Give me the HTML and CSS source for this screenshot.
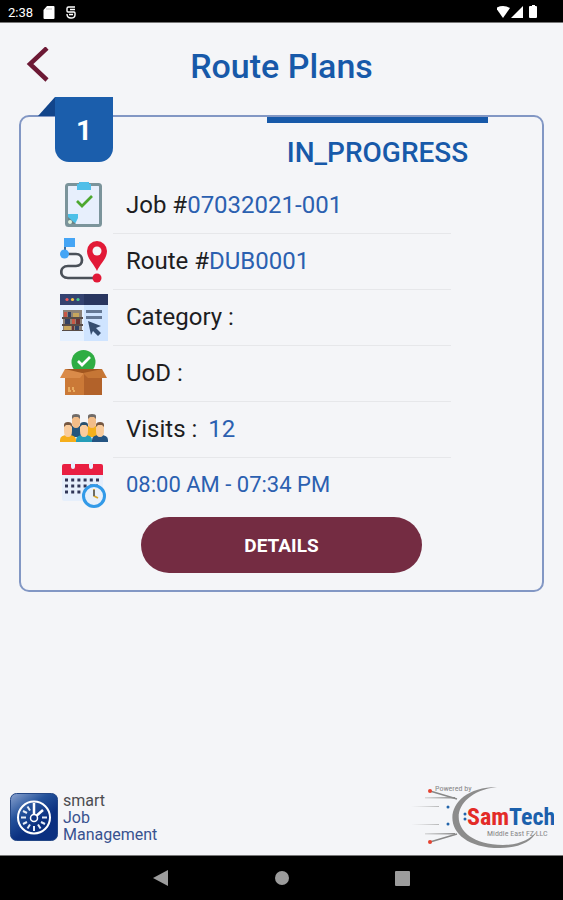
FILE: index.html
```html
<!DOCTYPE html>
<html lang="en">
<head>
<meta charset="utf-8">
<meta name="viewport" content="width=device-width, initial-scale=1">
<title>Route Plans</title>
<link rel="stylesheet" href="styles.css">
</head>
<body>
<div class="status-bar">
  <span class="clock">2:38</span>
  <svg class="sys-icon" viewBox="0 0 12 13" width="12" height="13" aria-hidden="true"><path d="M4 0h6.500q1 0 1 1v11q0 1-1 1h-9q-1 0-1-1V4z" fill="#fff"/><path d="M4 2v2M6 2v2M8 2v2" stroke="#bbb" stroke-width="1"/></svg>
  <svg class="sys-icon" viewBox="0 0 12 13" width="12" height="13" aria-hidden="true"><path d="M10 1H3.500Q2 1 2 2.500V5q0 1 1 1h6q1 0 1 1v2q0 3-4 3-4 0-4-4M5 3.500h5M4 8.500h4" fill="none" stroke="#fff" stroke-width="1.400"/></svg>
  <svg class="signals" viewBox="0 0 44 14" width="44" height="14" aria-hidden="true"><path d="M-1 3Q6-1 13 3L6 13z" fill="#fff"/><path d="M26 1v12H14z" fill="#fff"/><path d="M35 1V0h3v1h1q1 0 1 1v10q0 1-1 1h-6q-1 0-1-1V2q0-1 1-1z" fill="#fff"/></svg>
</div>

<main class="screen">
  <header class="top">
    <button class="back" type="button" aria-label="Back"><svg viewBox="0 2 24 38" width="24" height="38"><path d="M21 3 4 19l17 16" fill="none" stroke="#6c1935" stroke-width="4.500"/></svg></button>
    <h1>Route Plans</h1>
  </header>

  <article class="card">
    <div class="badge">
      <svg class="fold" viewBox="0 0 17 19" width="17" height="19" aria-hidden="true"><path d="M17 0v19H0z" fill="#12458b"/></svg>
      <span class="number">1</span>
    </div>
    <h2 class="state">IN_PROGRESS</h2>
    <ul class="facts">
      <li>
        <svg class="icon" viewBox="0 0 48 48" aria-hidden="true"><rect x="6.500" y="3.500" width="34" height="41" rx="2" fill="#e7effc" stroke="#7b949b" stroke-width="3"/><path d="M8 33h10v4l-3 6H8z" fill="#4dc0e8"/><path d="M8 36l8 7H8z" fill="#6d8588"/><circle cx="10" cy="41" r="2" fill="#dff2df"/><path d="M19 1h10v2h2v6H17V3h2z" fill="#51bfe9"/><path d="M17 20l5 5 10-10" fill="none" stroke="#4da82f" stroke-width="2.700"/></svg>
        <p>Job #<span class="value">07032021-001</span></p>
      </li>
      <li>
        <svg class="icon" viewBox="0 0 48 48" aria-hidden="true"><path d="M5 17h11c8 0 8 12 0 12H8c-9 0-9 12 0 12h28" fill="none" stroke="#4a5058" stroke-width="2.700"/><path d="M5 16V3" stroke="#416c9a" stroke-width="2"/><path d="M4 1h11v9H4z" fill="#45a5f5"/><circle cx="4.500" cy="17" r="4.500" fill="#45a5f5"/><path d="M37 34c-3-7-10-12-10-20a10 10 0 0 1 20 0c0 8-7 13-10 20z" fill="#e21937"/><circle cx="37" cy="14" r="4.500" fill="#f4f5f8"/><circle cx="37" cy="41" r="4.500" fill="#e21937"/></svg>
        <p>Route #<span class="value">DUB0001</span></p>
      </li>
      <li>
        <svg class="icon" viewBox="0 0 48 48" aria-hidden="true"><path d="M0 12h48v36H0z" fill="#e4f0ff"/><path d="M24 12h24v36H24z" fill="#cfe4ff"/><path d="M0 1h48v11H0z" fill="#344270"/><path d="M24 1h24v11H24z" fill="#293660"/><circle cx="7" cy="6.500" r="1.600" fill="#f05b5b"/><circle cx="12.500" cy="6.500" r="1.600" fill="#f9c646"/><circle cx="18" cy="6.500" r="1.600" fill="#4ac991"/><path d="M3 17h19v21H3z" fill="#8c8278"/><path d="M4 19h3v5H4zM12 26h3v5h-3z" fill="#c85745"/><path d="M8 19h3v5H8zM5 26h5v5H5zM15 33h4v4h-4z" fill="#334263"/><path d="M13 20h6v4h-6zM4 33h7v4H4z" fill="#c7a65d"/><path d="M16 26h4v5h-4zM12 33h2v4h-2z" fill="#6c3435"/><path d="M2 24h21v2H2zM2 31h21v2H2zM2 37h21v1H2z" fill="#574c48"/><path d="M26 17h16v3H26zM26 23h16v3H26z" fill="#647895"/><path d="M28 28l13 5-5 2 5 5-3 3-5-5-2 4z" fill="#364e70"/></svg>
        <p>Category :</p>
      </li>
      <li>
        <svg class="icon" viewBox="0 0 48 48" aria-hidden="true"><circle cx="23.500" cy="13" r="12" fill="#2fad43"/><path d="M18 12l4 4 8-8" fill="none" stroke="#fff" stroke-width="2.700"/><path d="M5 20h19v26H5z" fill="#cb7937"/><path d="M24 20h18v26H24z" fill="#b2622a"/><path d="M5 20h37v5H5z" fill="#a1561f"/><path d="M5 20l-5 9h20l4-5h-2z" fill="#da8b49"/><path d="M42 20l5 9H28l-5-5z" fill="#c67635"/><path d="M8 42h3M13 42h2M9 38v3M13 38v3" stroke="#f3bd6f" stroke-width="1.500"/></svg>
        <p>UoD :</p>
      </li>
      <li>
        <svg class="icon" viewBox="0 0 48 48" aria-hidden="true"><path d="M9 26q0-6 7-6t7 6v6H9z" fill="#24567d"/><path d="M25 26q0-6 7-6t7 6v6H25z" fill="#f4b01c"/><path d="M12 12h8v6q0 5-4 5t-4-5zM28 12h8v6q0 5-4 5t-4-5z" fill="#f2bd89"/><path d="M12 14v-3q0-2 4-2t4 2v3l-2-2h-4zM28 14v-3q0-2 4-2t4 2v3l-2-2h-4z" fill="#706b68"/><path d="M0 37v-2q0-5 8-5t8 5v2H0z" fill="#f5ae1b"/><path d="M16 37v-2q0-5 8-5t8 5v2H16z" fill="#259db8"/><path d="M32 37v-2q0-5 8-5t8 5v2H32z" fill="#245482"/><path d="M4 20h8v6q0 6-4 6t-4-6zM20 20h8v6q0 6-4 6t-4-6zM36 20h8v6q0 6-4 6t-4-6z" fill="#f9cc9d"/><path d="M4 22v-2q0-3 4-3t4 3v2l-2-2H6zM36 22v-2q0-3 4-3t4 3v2l-2-2h-4z" fill="#765842"/><path d="M20 22v-2q0-3 4-3t4 3v2l-2-2h-4z" fill="#27506f"/></svg>
        <p>Visits :<span class="value spaced">12</span></p>
      </li>
      <li>
        <svg class="icon" viewBox="0 0 48 48" aria-hidden="true"><rect x="2" y="4" width="41" height="36" rx="2" fill="#e6effb"/><path d="M2 14V5q0-2 2-2h37q2 0 2 2v9z" fill="#e91f42"/><path d="M13 2v4M31 2v4" stroke="#e8f0ff" stroke-width="4" stroke-linecap="round"/><path d="M5 19h36M5 25h33M5 31h18" stroke="#303657" stroke-width="3" stroke-dasharray="3 3.200"/><circle cx="34" cy="35" r="10.500" fill="#e8f0fa" stroke="#329ae8" stroke-width="3"/><path d="M34 28v7l4 2" fill="none" stroke="#d8a62b" stroke-width="1.800"/><path d="M34 29v6" stroke="#49566e" stroke-width="1.500"/></svg>
        <p class="hours"><span class="value">08:00 AM - 07:34 PM</span></p>
      </li>
    </ul>
    <button class="details" type="button">DETAILS</button>
  </article>

  <footer class="brands">
    <div class="product">
      <svg viewBox="0 0 48 48" width="48" height="48" aria-hidden="true">
        <defs><linearGradient id="tile" x1="0" y1="0" x2=".5" y2=".7"><stop offset="0" stop-color="#8ca4d0"/><stop offset=".55" stop-color="#24529b"/><stop offset="1" stop-color="#0b3080"/></linearGradient></defs>
        <rect x=".5" y=".5" width="47" height="47" rx="6" fill="url(#tile)" stroke="#244786"/>
        <circle cx="24" cy="24.500" r="16" fill="none" stroke="#fff" stroke-width="2"/>
        <path d="M24 33v5M11 24.500h5M32 24.500h5M13 18l4 2M13 31l4-2M31 29l4 2M17.500 13.500l2.500 4M17.500 35.500l2.500-4M30.500 35.500l-2.500-4" stroke="#e8eef8" stroke-width="2"/>
        <path d="M24 10v15l9-8" fill="none" stroke="#fff" stroke-width="2.500"/><circle cx="24" cy="25" r="3.500" fill="#0d3482" stroke="#fff" stroke-width="1.500"/>
      </svg>
      <p class="product-name"><span class="lead">smart</span><span>Job</span><span>Management</span></p>
    </div>
    <svg class="company" viewBox="0 0 145 68" width="145" height="68" role="img" aria-label="Powered by SamTech Middle East FZ LLC">
      <defs><linearGradient id="tail"><stop offset="0" stop-color="#aaa" stop-opacity="0"/><stop offset="1" stop-color="#888"/></linearGradient></defs>
      <path d="M88 4C30 4 26 65 91 65c18 0 32-6 37-17-6 8-18 14-34 14C36 62 36 10 88 4z" fill="#8c8c8c"/>
      <path d="M21 8l27 8M21 59l27-8" stroke="#888" stroke-width="1.500"/>
      <path d="M16 14h30v1.500H16zM2 23h28v1H2zM2 41h28v1H2zM16 50h30v1.500H16z" fill="url(#tail)"/>
      <circle cx="21" cy="8" r="2" fill="#e54331"/><circle cx="21" cy="59" r="2" fill="#e54331"/>
      <circle cx="39" cy="24" r="1.500" fill="#2264aa"/><circle cx="39" cy="41" r="1.500" fill="#2264aa"/>
      <circle cx="56" cy="31" r="1.500" fill="#2264aa"/><circle cx="56" cy="36" r="1.500" fill="#2264aa"/>
      <text class="small-mark" x="26" y="8">Powered by</text>
      <text class="big-mark" x="58" y="42"><tspan class="red">Sam</tspan><tspan class="blue">Tech</tspan></text>
      <text class="small-mark" x="78" y="53">Middle East FZ LLC</text>
    </svg>
  </footer>
</main>

<nav class="nav-bar" aria-label="System">
  <button type="button" aria-label="Back"><svg viewBox="0 0 16 16" width="16" height="16"><path d="M15 0v16L0 8z" fill="#9c9c9c"/></svg></button>
  <button type="button" aria-label="Home"><svg viewBox="0 0 16 16" width="16" height="16"><circle cx="8" cy="8" r="7" fill="#9c9c9c"/></svg></button>
  <button type="button" aria-label="Recent apps"><svg viewBox="0 0 16 16" width="16" height="16"><rect x="0" y="1" width="15" height="15" rx="1" fill="#9c9c9c"/></svg></button>
</nav>
</body>
</html>
```
FILE: styles.css
```css
* { box-sizing: border-box; }

body {
  margin: 0;
  min-height: 100vh;
  display: flex;
  flex-direction: column;
  background: #f4f5f8;
  color: #1d1d1f;
  font-family: Roboto, "Liberation Sans", sans-serif;
}

h1, h2, p, ul { margin: 0; padding: 0; }
ul { list-style: none; }
svg { display: block; flex: none; }

button {
  padding: 0;
  border: 0;
  background: none;
  font: inherit;
  cursor: pointer;
}

.status-bar {
  display: flex;
  align-items: center;
  gap: 10px;
  height: 23px;
  padding: 2px 22px 0 8px;
  border-bottom: 1px solid #777;
  background: #000;
  color: #fff;
}
.clock { font-size: 13px; }
.signals { margin-left: auto; }

.screen {
  flex: 1;
  display: flex;
  flex-direction: column;
}

.top {
  display: grid;
  grid-template-columns: 24px 1fr 24px;
  align-items: center;
  height: 92px;
  padding: 0 26px 6px;
}
h1 {
  color: #1759a9;
  font-size: 34px;
  font-weight: 500;
  line-height: 40px;
  text-align: center;
}

.card {
  position: relative;
  margin: 0 19px;
  padding-bottom: 17px;
  border: 2px solid #8297c4;
  border-radius: 10px;
}
.badge {
  position: absolute;
  top: -20px;
  left: 17px;
  display: flex;
}
.number {
  width: 58px;
  height: 65px;
  border-radius: 0 0 14px 14px;
  background: #1b5eac;
  color: #fff;
  font-size: 28px;
  font-weight: 700;
  line-height: 68px;
  text-align: center;
}
.state {
  width: 221px;
  margin: 0 54px 0 auto;
  padding: 13px 0 7px;
  border-top: 6px solid #1759a9;
  color: #1759a9;
  font-size: 28px;
  font-weight: 500;
  line-height: 34px;
  text-align: center;
}

.facts { padding: 0 91px 0 39px; }
.facts li {
  display: flex;
  align-items: center;
  gap: 5px;
  height: 56px;
}
.icon { width: 48px; height: 48px; }
.facts p {
  flex: 1;
  padding-left: 13px;
  border-bottom: 1px solid #e6e7ea;
  font-size: 24px;
  line-height: 56px;
}
.facts li:last-child p { border-color: transparent; }
.facts .hours { font-size: 22px; }
.value { color: #2b60b0; }
.spaced { margin-left: 11px; }

.details {
  display: block;
  width: 54%;
  height: 56px;
  margin: 4px auto 0;
  border-radius: 28px;
  background: #742c42;
  color: #fff;
  font-size: 19px;
  font-weight: 700;
}

.brands {
  display: flex;
  align-items: center;
  justify-content: space-between;
  margin-top: auto;
  padding: 0 9px 4px 10px;
}
.product { display: flex; align-items: center; gap: 5px; }
.product-name {
  color: #38528f;
  font-size: 16px;
  line-height: 17px;
}
.product-name span { display: block; }
.product-name .lead { color: #4c4c50; }
.small-mark, .big-mark { font-family: "Roboto Condensed", "Liberation Sans Narrow", Roboto, sans-serif; }
.small-mark { fill: #888; font-size: 8px; }
.big-mark { font-size: 24px; font-weight: 700; }
.red { fill: #e32b27; }
.blue { fill: #1b60ac; }

.nav-bar {
  display: flex;
  align-items: center;
  justify-content: center;
  gap: 105px;
  height: 45px;
  border-top: 1px solid #777;
  background: #000;
}
```
